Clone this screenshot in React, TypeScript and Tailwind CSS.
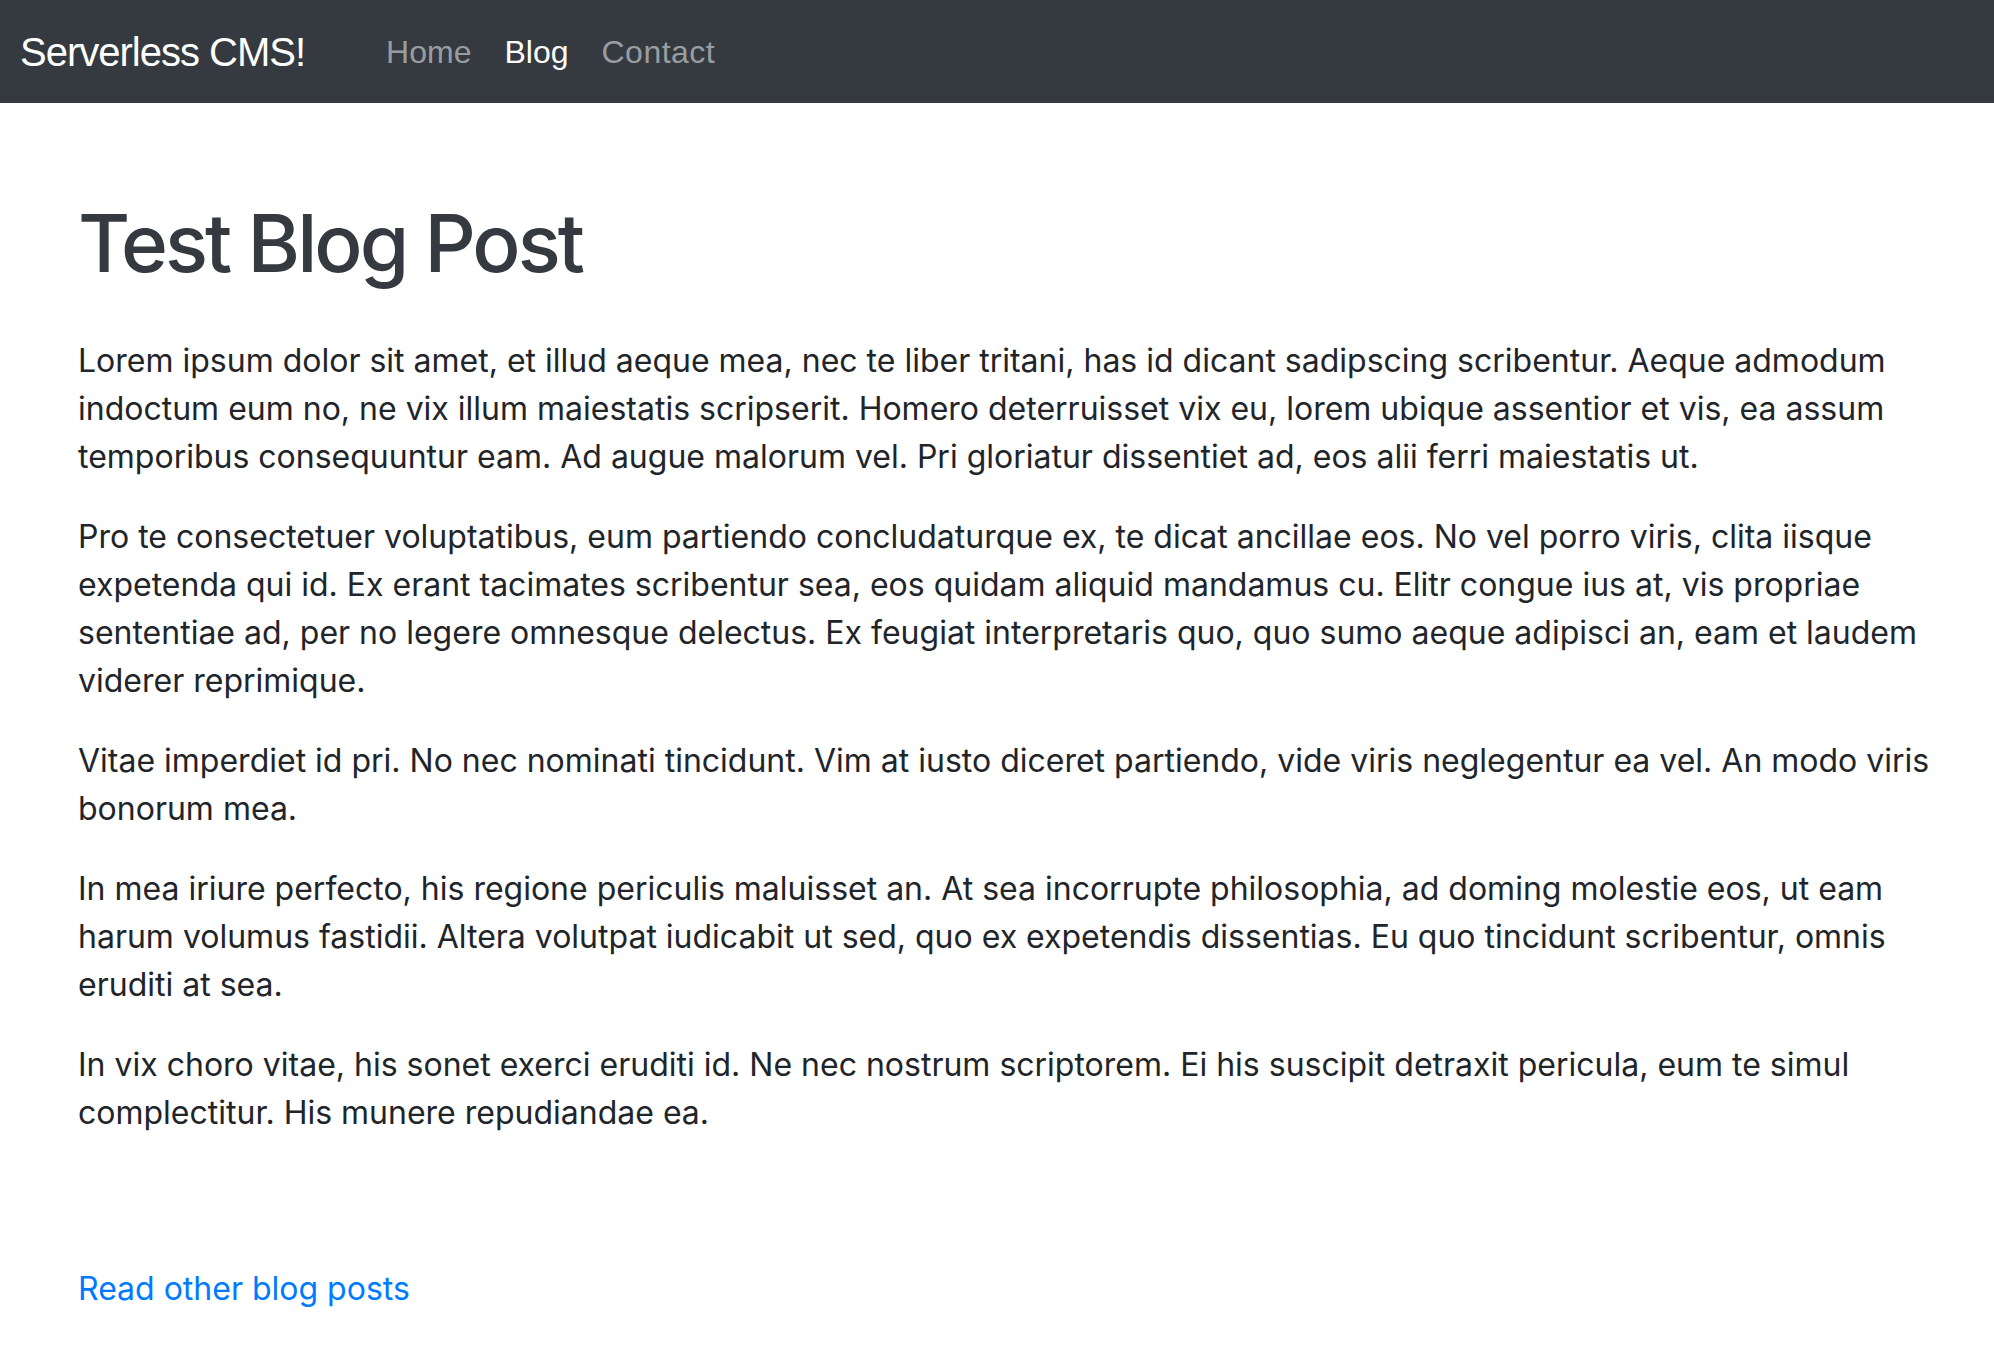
import React from 'react';

const paragraphs = [
  'Lorem ipsum dolor sit amet, et illud aeque mea, nec te liber tritani, has id dicant sadipscing scribentur. Aeque admodum indoctum eum no, ne vix illum maiestatis scripserit. Homero deterruisset vix eu, lorem ubique assentior et vis, ea assum temporibus consequuntur eam. Ad augue malorum vel. Pri gloriatur dissentiet ad, eos alii ferri maiestatis ut.',
  'Pro te consectetuer voluptatibus, eum partiendo concludaturque ex, te dicat ancillae eos. No vel porro viris, clita iisque expetenda qui id. Ex erant tacimates scribentur sea, eos quidam aliquid mandamus cu. Elitr congue ius at, vis propriae sententiae ad, per no legere omnesque delectus. Ex feugiat interpretaris quo, quo sumo aeque adipisci an, eam et laudem viderer reprimique.',
  'Vitae imperdiet id pri. No nec nominati tincidunt. Vim at iusto diceret partiendo, vide viris neglegentur ea vel. An modo viris bonorum mea.',
  'In mea iriure perfecto, his regione periculis maluisset an. At sea incorrupte philosophia, ad doming molestie eos, ut eam harum volumus fastidii. Altera volutpat iudicabit ut sed, quo ex expetendis dissentias. Eu quo tincidunt scribentur, omnis eruditi at sea.',
  'In vix choro vitae, his sonet exerci eruditi id. Ne nec nostrum scriptorem. Ei his suscipit detraxit pericula, eum te simul complectitur. His munere repudiandae ea.',
];

const Navbar: React.FC = () => (
  <nav className="h-[103px] bg-[#343a40] flex items-center pl-[20px] font-['Liberation_Sans',Arial,sans-serif]">
    <a href="#" className="text-white text-[40px] tracking-[-1px] leading-none">
      Serverless CMS!
    </a>
    <div className="flex items-center ml-[81px] gap-[33px] text-[32px] leading-none">
      <a href="#" className="text-[#9a9da0]">Home</a>
      <a href="#" className="text-white">Blog</a>
      <a href="#" className="text-[#9a9da0] tracking-[0.5px]">Contact</a>
    </div>
  </nav>
);

export default function App() {
  return (
    <div className="min-h-screen bg-white font-['Inter',sans-serif] text-[#212529]">
      <Navbar />
      <main className="pl-[78px] pr-[64px] pt-[92px] pb-[60px]">
        <h1 className="text-[80px] leading-[96px] font-medium text-[#343a40] tracking-[-3px] mb-[46px]">
          Test Blog Post
        </h1>
        {paragraphs.map((p, i) => (
          <p key={i} className="text-[32px] leading-[48px] mb-[32px]">
            {p}
          </p>
        ))}
        <div className="mt-[128px]">
          <a href="#" className="text-[32px] leading-[48px] text-[#007bff]">
            Read other blog posts
          </a>
        </div>
      </main>
    </div>
  );
}
